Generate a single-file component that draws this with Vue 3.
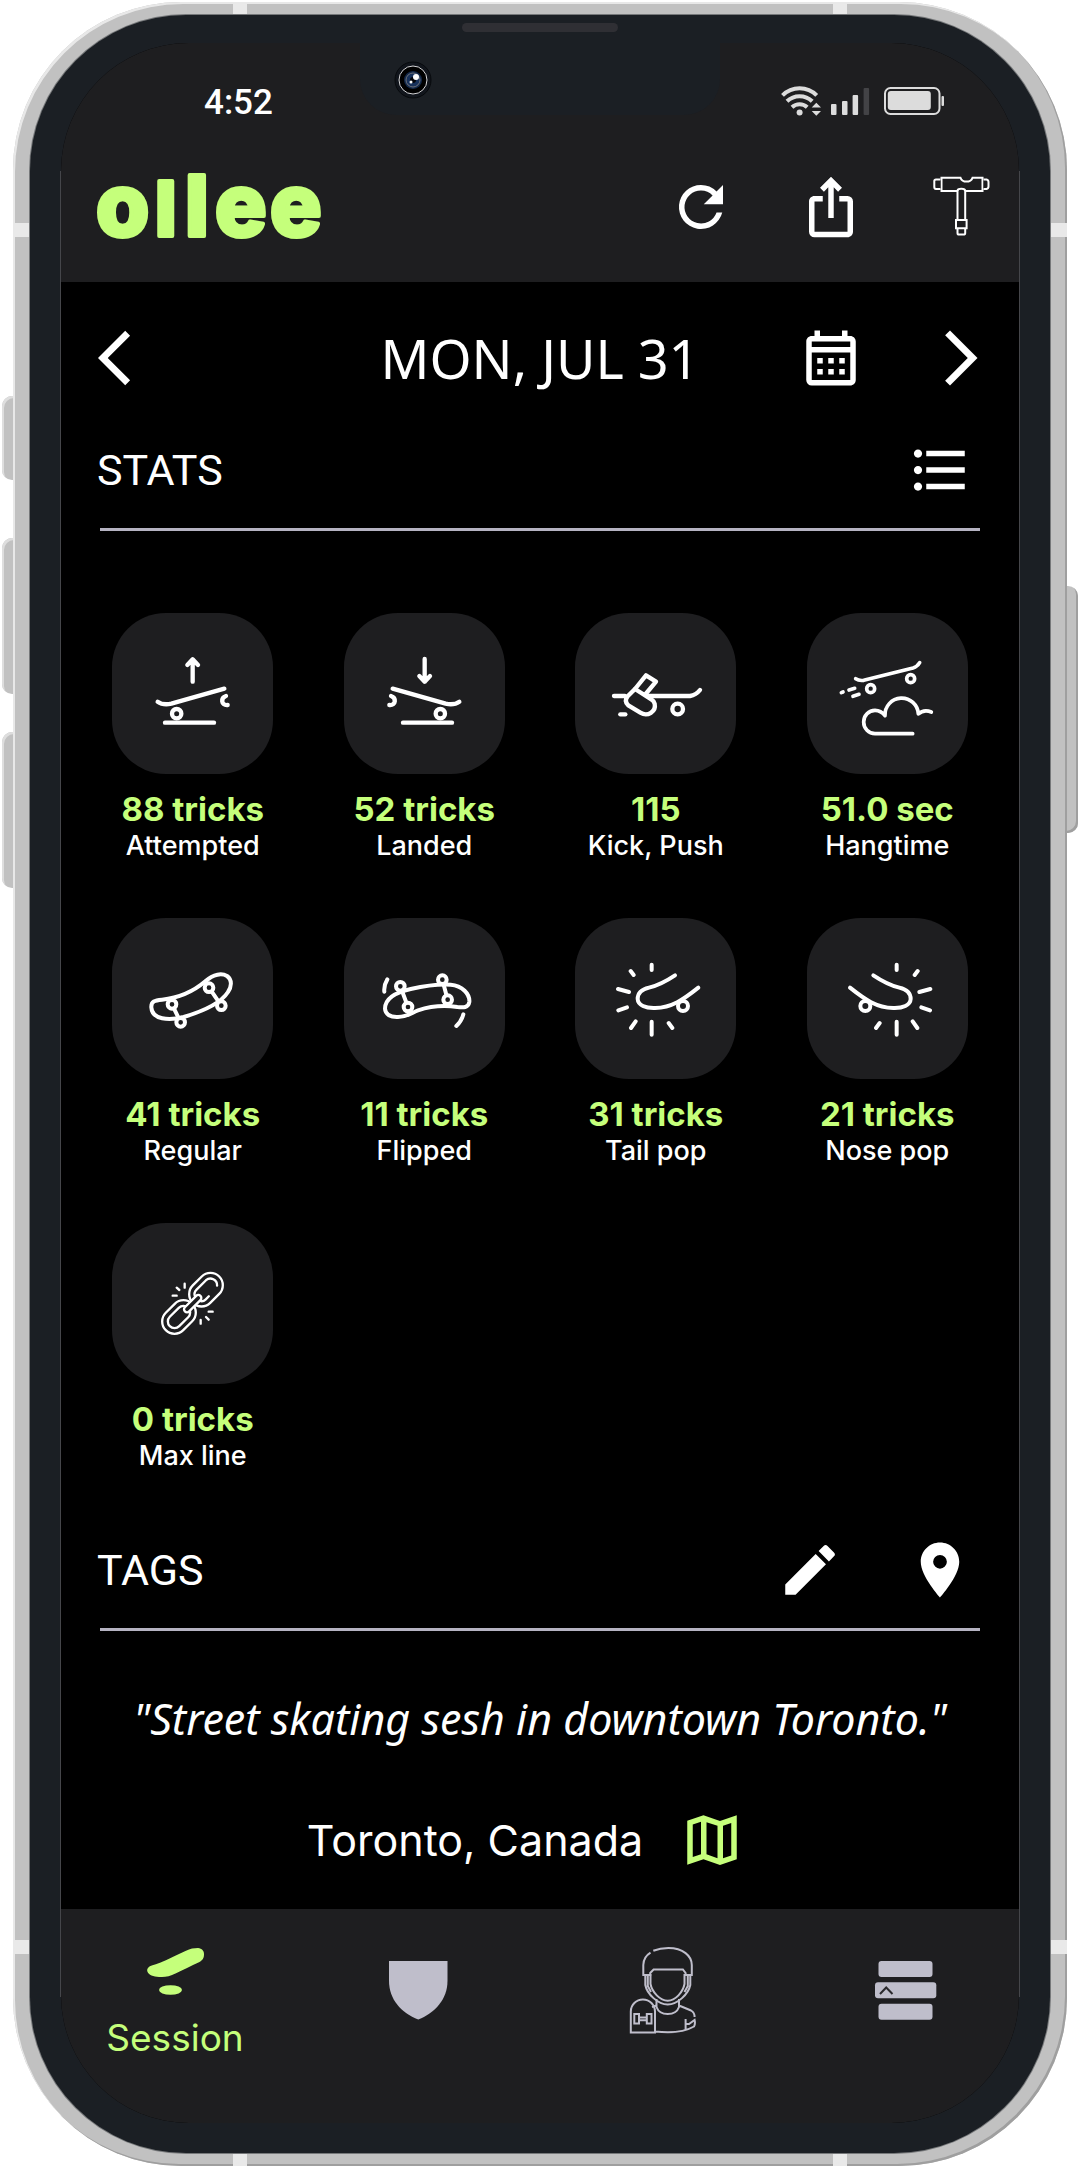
<template>
  <div class="phone">
    <span class="side-button mute"></span>
    <span class="side-button volume-up"></span>
    <span class="side-button volume-down"></span>
    <span class="side-button power"></span>
    <span class="antenna vertical top start"></span>
    <span class="antenna vertical top end"></span>
    <span class="antenna vertical bottom start"></span>
    <span class="antenna vertical bottom end"></span>
    <span class="antenna horizontal upper"></span>
    <span class="antenna horizontal lower"></span>

    <div class="bezel">
      <span class="speaker"></span>
      <div class="notch">
        <svg class="camera" viewBox="0 0 38 38" aria-hidden="true">
          <circle cx="19" cy="19" r="18" fill="#11151c" stroke="#07090c" />
          <circle cx="19" cy="19" r="14" fill="#000" stroke="#d5d5d8" />
          <circle cx="19" cy="19" r="9" fill="#13294b" />
          <circle cx="19" cy="19" r="7" fill="#17315b" stroke="#6d7078" />
          <circle cx="19" cy="19" r="3" fill="#02040a" />
          <circle cx="22" cy="16" r="3" fill="#fff" />
          <circle cx="17" cy="21" r="1.5" fill="#fff" />
        </svg>
      </div>

      <div class="screen">
        <header>
          <div class="status-bar">
            <span class="clock">4:52</span>
            <svg class="status-icons" viewBox="0 0 164 32" fill="#dcdcdc" aria-hidden="true">
              <g fill="none" stroke="#dcdcdc" stroke-width="4">
                <path d="M2.5 10.4A24 24 0 0 1 36.7 10.4" />
                <path d="M7 16.3A18 18 0 0 1 32.2 16.3" />
                <path d="M12 22.3A11 11 0 0 1 27.2 22.3" />
              </g>
              <circle cx="19.6" cy="27.5" r="3" />
              <path d="M31.7 22.4L36.3 17.8L41 22.4ZM31.7 26L36.3 30.8L41 26Z" />
              <rect x="51" y="19" width="5.5" height="11" rx="1" />
              <rect x="62" y="16" width="5.5" height="14" rx="1" />
              <rect x="72.6" y="10" width="5.5" height="20" rx="1" />
              <rect x="83.6" y="3" width="5.5" height="27" rx="1" fill="#434346" />
              <rect x="105" y="3" width="54.5" height="26" rx="5.5" fill="none" stroke="#dcdcdc" stroke-width="2" />
              <rect x="107.8" y="6" width="43" height="19" rx="3" />
              <rect x="161.5" y="11" width="2.5" height="10" rx="1" />
            </svg>
          </div>
          <div class="app-bar">
            <svg class="logo" viewBox="0 0 240 66" role="img" aria-label="ollee">
              <text y="62"><tspan x="0">o</tspan><tspan class="first-l" x="59">l</tspan><tspan class="second-l" x="89">l</tspan><tspan x="119">e</tspan><tspan x="174">e</tspan></text>
            </svg>
            <div class="actions">
              <button type="button" aria-label="Refresh">
                <svg viewBox="0 0 24 24"><path :d="icons.refresh" /></svg>
              </button>
              <button type="button" aria-label="Share">
                <svg viewBox="0 0 24 24"><path :d="icons.share" /></svg>
              </button>
              <button type="button" aria-label="Setup">
                <svg viewBox="0 0 66 66" class="tool">
                  <path d="M13.5 3.8H32.5Q34 7.6 38.5 7.6Q43 7.6 44.5 3.8H54.5V17H13.5Z" />
                  <path d="M12.5 5.5H8Q6.3 5.5 6.3 7V13Q6.3 15 8 15H12.5M55.5 5.5H58.5Q60.5 6 60.5 8V12.5Q60.5 14.6 58.5 15H55.5" />
                  <path d="M29.5 46V17Q29.5 14.8 33.3 14.8Q37.2 14.8 37.2 17V46" />
                  <path d="M28 46H38.6V54.3H28ZM29.5 54.3V59Q29.5 60.6 31 60.6H35.5Q37.2 60.6 37.2 59V54.3" />
                </svg>
              </button>
            </div>
          </div>
        </header>

        <main>
          <div class="date-row">
            <button type="button" class="previous" aria-label="Previous day">
              <svg viewBox="0 0 24 24"><path :d="icons.back" /></svg>
            </button>
            <h1>MON, JUL 31</h1>
            <div class="actions">
              <button type="button" aria-label="Pick a day">
                <svg viewBox="0 0 24 24"><path :d="icons.calendar" /></svg>
              </button>
              <button type="button" aria-label="Next day">
                <svg viewBox="0 0 24 24"><path :d="icons.forward" /></svg>
              </button>
            </div>
          </div>

          <section class="stats">
            <div class="section-head">
              <h2>STATS</h2>
              <div class="actions">
                <button type="button" aria-label="List view">
                  <svg viewBox="0 0 24 24"><path :d="icons.list" /></svg>
                </button>
              </div>
            </div>
            <hr />
            <ul class="stat-grid">
              <li v-for="stat in stats" :key="stat.label">
                <svg class="tile" viewBox="0 0 483 483" :stroke-width="stat.stroke" aria-hidden="true">
                  <g :transform="stat.transform">
                    <path v-for="d in stat.paths" :key="d" :d="d" />
                    <circle v-for="(wheel, i) in stat.wheels" :key="i" :cx="wheel[0]" :cy="wheel[1]" :r="wheel[2]" />
                  </g>
                  <path v-if="stat.arrow" :d="stat.arrow" />
                  <!-- chain links -->
                  <template v-if="stat.chain">
                    <g transform="translate(282 200) rotate(-45)">
                      <rect x="-56" y="-37" width="112" height="74" rx="37" />
                      <path d="M-38 -8Q-34 -20 -20 -20H20A20 20 0 0 1 32 15M-8 20H-22Q-32 20 -37 11" />
                    </g>
                    <g transform="translate(201 282) rotate(-45)">
                      <rect x="-56" y="-37" width="112" height="74" rx="37" />
                      <rect x="-39" y="-20" width="78" height="40" rx="20" />
                    </g>
                    <rect class="joint" x="-33" y="-9" width="66" height="18" rx="9" transform="translate(242 242) rotate(-45)" />
                  </template>
                </svg>
                <strong>{{ stat.value }}</strong>
                <span>{{ stat.label }}</span>
              </li>
            </ul>
          </section>

          <section class="tags">
            <div class="section-head">
              <h2>TAGS</h2>
              <div class="actions">
                <button type="button" aria-label="Edit">
                  <svg viewBox="0 0 24 24"><path :d="icons.edit" /></svg>
                </button>
                <button type="button" aria-label="Set location">
                  <svg viewBox="0 0 24 24"><path :d="icons.pin" /></svg>
                </button>
              </div>
            </div>
            <hr />
            <p class="note">"Street skating sesh in downtown Toronto."</p>
            <div class="location">
              <span>Toronto, Canada</span>
              <button type="button" aria-label="Open map">
                <svg viewBox="0 0 24 24"><path :d="icons.map" fill-rule="evenodd" /></svg>
              </button>
            </div>
          </section>
        </main>

        <nav>
          <a href="#session" class="active">
            <svg class="session-icon" viewBox="0 0 60 50" aria-hidden="true">
              <path d="M3 21C5 18 9 18 15 15.7C24 12 31 8 41 3.7C45 1.6 49 1 53 1C57 1.5 59 4 59 7C59 11 58 13 54 15.3C46 19 38 23 30.5 26.5C26 29 21 29.9 17 29.9C11 30 5 29 3 25.7Q1.3 23 3 21Z" />
              <ellipse cx="25.5" cy="43" rx="11.5" ry="4.8" />
            </svg>
            Session
          </a>
          <a href="#badges" aria-label="Badges">
            <svg viewBox="0 0 88 88" aria-hidden="true">
              <path d="M15 14H73.5V34C73.5 52 61 66 44.3 72.5C27 66 15 52 15 34Z" />
            </svg>
          </a>
          <a href="#profile" aria-label="Profile">
            <svg viewBox="0 0 88 88" class="line" aria-hidden="true">
              <path d="M35.3 3.7Q42 1 50.4 1C65 1 73.8 9 73.8 18V28H67.6V26L64.9 22.5H35.6L32.2 26V28H25.3V18Q25.5 10 32.5 5.7" />
              <path d="M32.5 27V37C34 45 42 53.7 49.7 53.7C57.5 53.7 65 45 66.5 37V27" />
              <path d="M27.3 28V38C29 47 40 57.5 49.7 57.5C59.5 57.5 70.5 47 72.3 38V28M29.8 29V39L33 45M69.8 29V39L66.5 45" />
              <path d="M38.5 52V60Q41 67 49.7 67Q58.5 67 61 60V52M61 58.5L73 63.5Q76.6 65.5 76.6 70" />
              <path d="M12.8 85.5V64.5A12.1 12.1 0 0 1 37 64.5V85.5ZM34 60L38.5 58.5M37 84.5Q62 87.5 76 79.5Q77.5 77 76.6 73L71 77H67.6V82.5M67.6 72V80" />
              <path d="M16.3 67H21V76.6H16.3ZM28.8 67H33.5V76.6H28.8ZM21 70.5H28.8M21 73.3H28.8" />
            </svg>
          </a>
          <a href="#menu" aria-label="Menu">
            <svg viewBox="0 0 88 88" aria-hidden="true">
              <rect x="17.5" y="14" width="54" height="16" rx="3" />
              <rect x="14" y="35.3" width="61.3" height="16" rx="3" />
              <rect x="17.5" y="56.7" width="54" height="16" rx="3" />
              <path d="M19 47L25.2 40.5L31.5 47" fill="none" stroke="#2a2a2d" stroke-width="2" />
            </svg>
          </a>
        </nav>
      </div>
    </div>
  </div>
</template>

<script setup>
// 24x24 glyphs
const icons = {
  refresh: 'M17.65 6.35A7.96 7.96 0 0 0 12 4a8 8 0 1 0 7.73 10h-2.08A6 6 0 1 1 12 6c1.66 0 3.14.69 4.22 1.78L13 11h7V4z',
  share: 'M16 5l-1.42 1.42-1.59-1.59V16h-1.98V4.83L9.42 6.42 8 5l4-4 4 4zm4 5v11c0 1.1-.9 2-2 2H6a2 2 0 0 1-2-2V10c0-1.11.89-2 2-2h3v2H6v11h12V10h-3V8h3a2 2 0 0 1 2 2z',
  back: 'M11.67 3.87L9.9 2.1 0 12l9.9 9.9 1.77-1.77L3.54 12z',
  forward: 'M6.23 20.23L8 22l10-10L8 2 6.23 3.77 14.46 12z',
  calendar: 'M19 4h-1V2h-2v2H8V2H6v2H5c-1.11 0-1.99.9-1.99 2L3 20a2 2 0 0 0 2 2h14c1.1 0 2-.9 2-2V6c0-1.1-.9-2-2-2zm0 16H5V10h14v10zm0-12H5V6h14v2zM9 14H7v-2h2v2zm4 0h-2v-2h2v2zm4 0h-2v-2h2v2zm-8 4H7v-2h2v2zm4 0h-2v-2h2v2zm4 0h-2v-2h2v2z',
  list: 'M4 10.5c-.83 0-1.5.67-1.5 1.5s.67 1.5 1.5 1.5 1.5-.67 1.5-1.5-.67-1.5-1.5-1.5zm0-6c-.83 0-1.5.67-1.5 1.5S3.17 7.5 4 7.5 5.5 6.83 5.5 6 4.83 4.5 4 4.5zm0 12c-.83 0-1.5.68-1.5 1.5s.68 1.5 1.5 1.5 1.5-.68 1.5-1.5-.67-1.5-1.5-1.5zM7 19h14v-2H7v2zm0-6h14v-2H7v2zm0-8v2h14V5H7z',
  edit: 'M3 17.25V21h3.75L17.81 9.94l-3.75-3.75L3 17.25zM20.71 7.04a1 1 0 0 0 0-1.41l-2.34-2.34a1 1 0 0 0-1.41 0l-1.83 1.83 3.75 3.75 1.83-1.83z',
  pin: 'M12 2C8.13 2 5 5.13 5 9c0 5.25 7 13 7 13s7-7.75 7-13c0-3.87-3.13-7-7-7zm0 9.5a2.5 2.5 0 0 1 0-5 2.5 2.5 0 0 1 0 5z',
  map: 'M3 5L8.9 3L14.9 5.1L21 3V19L14.9 21.1L8.9 19L3 21ZM5 6.4V18.2L8 17.2V5.4ZM10 5.5V17.2L14 18.6V6.8ZM16 6.8V18.6L19 17.6V5.8Z',
};

const ramp = ['M137 266C148 274 160 276 178 272L337 227', 'M159 329H306', 'M342 249C326 254 326 278 347 276'];
const pop = [
  'M300 172Q258 200 222 209C196 215 188 228 188 243C189 262 212 271 240 270C290 269 325 245 370 209',
  'M230 140V156M230 311V350M167 159L176 171M129 213L162 222M130 277L156 268M182 310L168 330M281 315L292 330',
];

const stats = [
  { value: '88 tricks', label: 'Attempted', stroke: 13, paths: ramp, wheels: [[194, 302, 14]], arrow: 'M242 206V139M226 156L242 139L258 156' },
  {
    value: '52 tricks',
    label: 'Landed',
    stroke: 13,
    paths: ramp,
    wheels: [[194, 302, 14]],
    transform: 'translate(483 0) scale(-1 1)',
    arrow: 'M242 138V206M226 189L242 206L258 189',
  },
  {
    value: '115',
    label: 'Kick, Push',
    stroke: 13,
    paths: [
      'M117 249H150M218 249H345Q363 246 375 231',
      'M180 228L213 187L243 206L212 243',
      'M180 228L158 250Q146 264 160 277L196 299C218 312 244 296 239 272Q237 264 229 259Z',
      'M136 304H151',
    ],
    wheels: [[308, 288, 16]],
  },
  {
    value: '51.0 sec',
    label: 'Hangtime',
    stroke: 11,
    paths: [
      'M146 197Q156 204 170 202L318 165Q331 161 338 149',
      'M103 239L108 237M126 231L143 226M138 250L156 244',
      'M317 362H204A34 35 0 0 1 204 292Q222 292 234 308A50 50 0 0 1 334 303Q350 288 373 297',
    ],
    wheels: [[191, 227, 12], [311, 197, 12]],
  },
  {
    value: '41 tricks',
    label: 'Regular',
    stroke: 12,
    paths: [
      'M118 268C117 250 128 247 150 245C200 240 245 220 280 190C305 167 330 165 345 174C362 186 358 208 348 222C325 258 262 283 215 297C170 309 120 305 118 268Z',
      'M180 259L206 313M291 209L328 263',
    ],
    wheels: [[180, 259, 13], [206, 313, 13], [291, 209, 13], [328, 263, 13]],
  },
  {
    value: '11 tricks',
    label: 'Flipped',
    stroke: 12,
    paths: [
      'M123 272C123 240 160 222 200 213C240 204 290 198 320 200C355 203 378 228 376 252C373 270 358 269 340 267C300 261 255 266 222 277C205 283 190 297 162 297C140 298 124 290 123 272Z',
      'M169 205L192 267M295 185L311 245',
      'M130 184Q119 202 121 221M358 289Q353 309 337 324',
    ],
    wheels: [[169, 205, 13], [192, 267, 13], [295, 185, 13], [311, 245, 13]],
  },
  { value: '31 tricks', label: 'Tail pop', stroke: 12, paths: pop, wheels: [[324, 264, 15]] },
  { value: '21 tricks', label: 'Nose pop', stroke: 12, paths: pop, wheels: [[324, 264, 15]], transform: 'translate(499 0) scale(-1 1)' },
  {
    value: '0 tricks',
    label: 'Max line',
    stroke: 7,
    paths: ['M218 182V194M194 194L202 201M182 218H194M266 291V302M282 282L290 290M290 266H302'],
    chain: true,
  },
];
</script>

<style>
body {
  margin: 0;
  background: #fff;
}
</style>

<style scoped>
.phone {
  position: relative;
  margin: 2px 13px;
  padding: 13px 17px;
  border-radius: 168px;
  background: #c1c1c1;
  box-shadow: inset 2px 2px 0 #e8e8e8, inset -2px -2px 0 #9f9f9f;
  font-family: Inter, 'Liberation Sans', sans-serif;
  color: #fff;
}

.side-button {
  position: absolute;
  z-index: -1;
  left: -11px;
  width: 30px;
  border-radius: 10px;
  background: #c1c1c1;
  box-shadow: inset 2px 2px 0 #dedede;
}

.mute {
  top: 394px;
  height: 84px;
}

.volume-up {
  top: 536px;
  height: 156px;
}

.volume-down {
  top: 730px;
  height: 156px;
}

.power {
  top: 584px;
  left: auto;
  right: -11px;
  height: 247px;
  box-shadow: inset -2px -2px 0 #9f9f9f;
}

.antenna {
  position: absolute;
  background: #e9e9e9;
}

.vertical {
  width: 14px;
  height: 14px;
}

.horizontal {
  left: 0;
  right: 0;
  height: 14px;
}

.top {
  top: 0;
}

.bottom {
  bottom: 0;
}

.start {
  left: 220px;
}

.end {
  right: 220px;
}

.upper {
  top: 221px;
}

.lower {
  bottom: 212px;
}

.bezel {
  position: relative;
  padding: 28px 31px 30px;
  border-radius: 156px;
  background: #1b1f24;
  box-shadow: 0 0 0 1px #76787a;
}

/* hairline along the straight part of the glass */
.bezel::after {
  content: '';
  position: absolute;
  top: 156px;
  bottom: 156px;
  left: 30px;
  right: 30px;
  border: solid #45464a;
  border-width: 0 1px;
  pointer-events: none;
}

.speaker {
  position: absolute;
  top: 8px;
  left: 50%;
  width: 156px;
  height: 9px;
  border-radius: 5px;
  background: #2f2f34;
  transform: translateX(-50%);
}

.notch {
  position: absolute;
  z-index: 1;
  top: 24px;
  left: 50%;
  width: 360px;
  height: 76px;
  border-radius: 0 0 36px 36px;
  background: #1b1f24;
  transform: translateX(-50%);
}

.camera {
  position: absolute;
  top: 22px;
  left: 34px;
  width: 38px;
  height: 38px;
}

.screen {
  overflow: hidden;
  border-radius: 128px;
  background: #000;
}

header,
nav {
  background: #1e1e20;
}

.status-bar {
  display: flex;
  align-items: center;
  justify-content: space-between;
  height: 116px;
  padding: 0 75px 0 143px;
}

.clock {
  padding-top: 3px;
  font: 500 35px/40px Roboto, sans-serif;
}

.status-icons {
  width: 164px;
  height: 32px;
}

.app-bar {
  display: flex;
  align-items: flex-start;
  justify-content: space-between;
  padding: 15px 25px 42px 35px;
}

.logo {
  width: 240px;
  height: 66px;
  overflow: visible;
}

.logo text {
  font: 800 86px Inter, sans-serif;
  fill: #c5ff7b;
  stroke: #c5ff7b;
  stroke-width: 4px;
  stroke-linejoin: round;
}

.logo .first-l {
  font-size: 76px;
}

.logo .second-l {
  font-size: 84px;
}

.actions {
  display: flex;
  gap: 64px;
}

button {
  display: block;
  padding: 0;
  border: 0;
  background: none;
  color: inherit;
  cursor: pointer;
}

button svg {
  display: block;
  width: 66px;
  height: 66px;
  fill: currentColor;
}

button .tool {
  fill: #1e1e20;
  stroke: currentColor;
  stroke-width: 2;
}

main {
  padding: 43px 0 36px;
}

.date-row {
  display: grid;
  grid-template-columns: 1fr auto 1fr;
  align-items: center;
  padding: 0 25px;
  margin-bottom: 46px;
}

.date-row .actions {
  justify-content: flex-end;
}

.previous {
  justify-self: start;
  margin-left: 12px;
}

h1,
h2,
p {
  margin: 0;
  font-weight: 400;
}

h1 {
  font: 400 54px/60px 'Noto Sans', sans-serif;
}

.section-head {
  display: flex;
  align-items: center;
  justify-content: space-between;
  padding: 0 46px 25px 36px;
}

h2 {
  font: 400 43px/48px Roboto, sans-serif;
}

hr {
  height: 3px;
  margin: 0 39px;
  border: 0;
  background: #b5b3c2;
}

.stat-grid {
  display: grid;
  grid-template-columns: repeat(4, 1fr);
  row-gap: 54px;
  margin: 82px 16px 63px;
  padding: 0;
  list-style: none;
}

.stat-grid li {
  display: flex;
  flex-direction: column;
  align-items: center;
  font-size: 27px;
  font-weight: 500;
  line-height: 36px;
}

.stat-grid strong {
  margin-top: 16px;
  font-size: 33px;
  font-weight: 700;
  line-height: 38px;
  color: #c5ff7b;
}

.tile {
  width: 161px;
  height: 161px;
  border-radius: 54px;
  background: #1e1e20;
  fill: none;
  stroke: #fff;
  stroke-linecap: round;
  stroke-linejoin: round;
}

.tile circle,
.joint {
  fill: #1e1e20;
}

.note {
  margin: 58px 0;
  font: italic 400 43px/60px 'Noto Sans', sans-serif;
  text-align: center;
}

.location {
  display: flex;
  align-items: center;
  justify-content: center;
  gap: 36px;
  padding-right: 28px;
  font-size: 43px;
  line-height: 54px;
}

.location button {
  color: #c5ff7b;
}

nav {
  display: flex;
  justify-content: space-between;
  height: 176px;
  padding: 38px 34px 0;
}

nav a {
  display: flex;
  flex-direction: column;
  align-items: center;
  width: 160px;
  color: #bfbecb;
  font-size: 37px;
  line-height: 46px;
  text-decoration: none;
}

nav svg {
  width: 88px;
  height: 88px;
  fill: currentColor;
}

nav .line {
  fill: none;
  stroke: currentColor;
  stroke-width: 2;
}

nav .session-icon {
  width: 60px;
  height: 50px;
  margin-bottom: 18px;
}

nav .active {
  color: #c5ff7b;
}
</style>
